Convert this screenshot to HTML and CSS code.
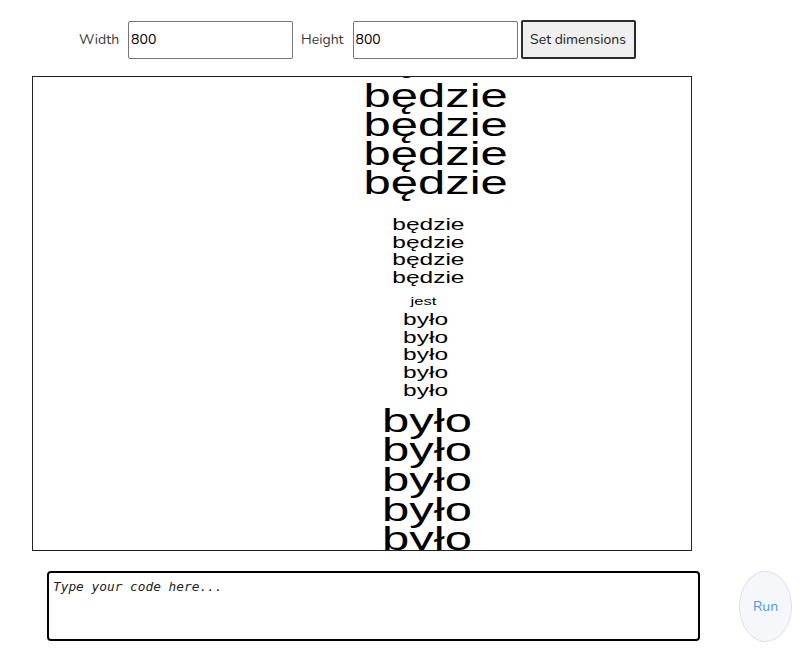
FILE: index.html
```html
<!DOCTYPE html>
<html lang="pl">
<head>
<meta charset="utf-8">
<title>Canvas</title>
<link rel="stylesheet" href="styles.css">
</head>
<body>
<div class="toolbar">
  <label class="lbl" for="w">Width</label>
  <input id="w" class="num" type="text" value="800">
  <label class="lbl lbl-h" for="h">Height</label>
  <input id="h" class="num" type="text" value="800">
  <button class="set-btn" type="button">Set dimensions</button>
</div>
<div class="stage">
  <div class="words">
    <div class="grp big first shift-a">
      <div class="ghost">będzie</div><div>będzie</div><div>będzie</div><div>będzie</div><div>będzie</div>
    </div>
    <div class="grp mid g-mb">
      <div>będzie</div><div>będzie</div><div>będzie</div><div>będzie</div>
    </div>
    <div class="grp small g-j">
      <div>jest</div>
    </div>
    <div class="grp mid g-my">
      <div>było</div><div>było</div><div>było</div><div>było</div><div>było</div>
    </div>
    <div class="grp big g-by">
      <div>było</div><div>było</div><div>było</div><div>było</div><div>było</div>
    </div>
  </div>
</div>
<div class="bottom">
  <textarea class="code" placeholder="Type your code here..."></textarea>
  <button class="run" type="button">Run</button>
</div>
</body>
</html>
```
FILE: styles.css
```css
html, body {
  margin: 0;
  padding: 0;
  background: #fff;
}
body {
  font-family: "Nunito", "Noto Sans", "Open Sans", sans-serif;
  width: 809px;
  height: 665px;
  overflow: hidden;
}
.toolbar {
  display: flex;
  align-items: center;
  padding: 20px 0 0 79px;
  height: 39px;
}
.lbl {
  font-size: 14px;
  color: #3a3a3a;
  margin-right: 9px;
}
.lbl-h {
  margin-left: 8px;
}
.num {
  box-sizing: border-box;
  width: 165px;
  height: 38px;
  border: 1px solid #767676;
  border-radius: 2px;
  padding: 0 2px;
  font-family: "Nunito", "Noto Sans", sans-serif;
  font-size: 14px;
  color: #000;
  outline: none;
}
.set-btn {
  box-sizing: border-box;
  margin-left: 3px;
  width: 115px;
  height: 39px;
  background: #efefef;
  border: 2px solid #2b2b2b;
  border-radius: 2px;
  font-family: "Nunito", "Noto Sans", sans-serif;
  font-size: 14px;
  color: #222;
  padding: 0;
}
.stage {
  box-sizing: border-box;
  margin: 17px 0 0 32px;
  width: 660px;
  height: 475px;
  border: 1px solid #222;
  overflow: hidden;
}
.words {
  font-family: "Liberation Sans", Arial, sans-serif;
  color: #000;
  padding-left: 130px;
  text-align: center;
  transform: scaleX(1.44);
  transform-origin: 394px 0;
}
.grp div {
  white-space: nowrap;
}
.big {
  font-size: 34px;
  line-height: 29px;
}
.mid {
  font-size: 17px;
  line-height: 17.7px;
}
.small {
  font-size: 11.5px;
  line-height: 16px;
}
.first {
  margin-top: -32px;
}
.grp .ghost {
  height: 35.5px;
}
.shift-a {
  padding-left: 12px;
}
.g-mb {
  margin-top: 19.5px;
  padding-left: 2px;
}
.g-j {
  margin-top: 6px;
  margin-left: -5px;
}
.g-my {
  margin-top: 2px;
  margin-left: -2px;
}
.g-by {
  margin-top: 6.5px;
  line-height: 29.6px;
}
.bottom {
  display: flex;
  align-items: flex-start;
  margin-top: 20px;
  padding-left: 47px;
}
.code {
  box-sizing: border-box;
  width: 653px;
  height: 70px;
  border: 2px solid #000;
  border-radius: 4px;
  padding: 6px 4px;
  resize: none;
  font-family: "DejaVu Sans Mono", "Liberation Mono", monospace;
  font-style: italic;
  font-size: 12.8px;
  line-height: 16px;
  outline: none;
}
.code::placeholder {
  color: #222;
  opacity: 1;
}
.run {
  box-sizing: border-box;
  margin-left: 39px;
  width: 53px;
  height: 71px;
  border-radius: 50%;
  background: #f5f7fa;
  border: 1px solid #dde1e7;
  color: #4a9ae6;
  font-family: "Nunito", "Noto Sans", sans-serif;
  font-size: 14px;
  padding: 0;
}
```
